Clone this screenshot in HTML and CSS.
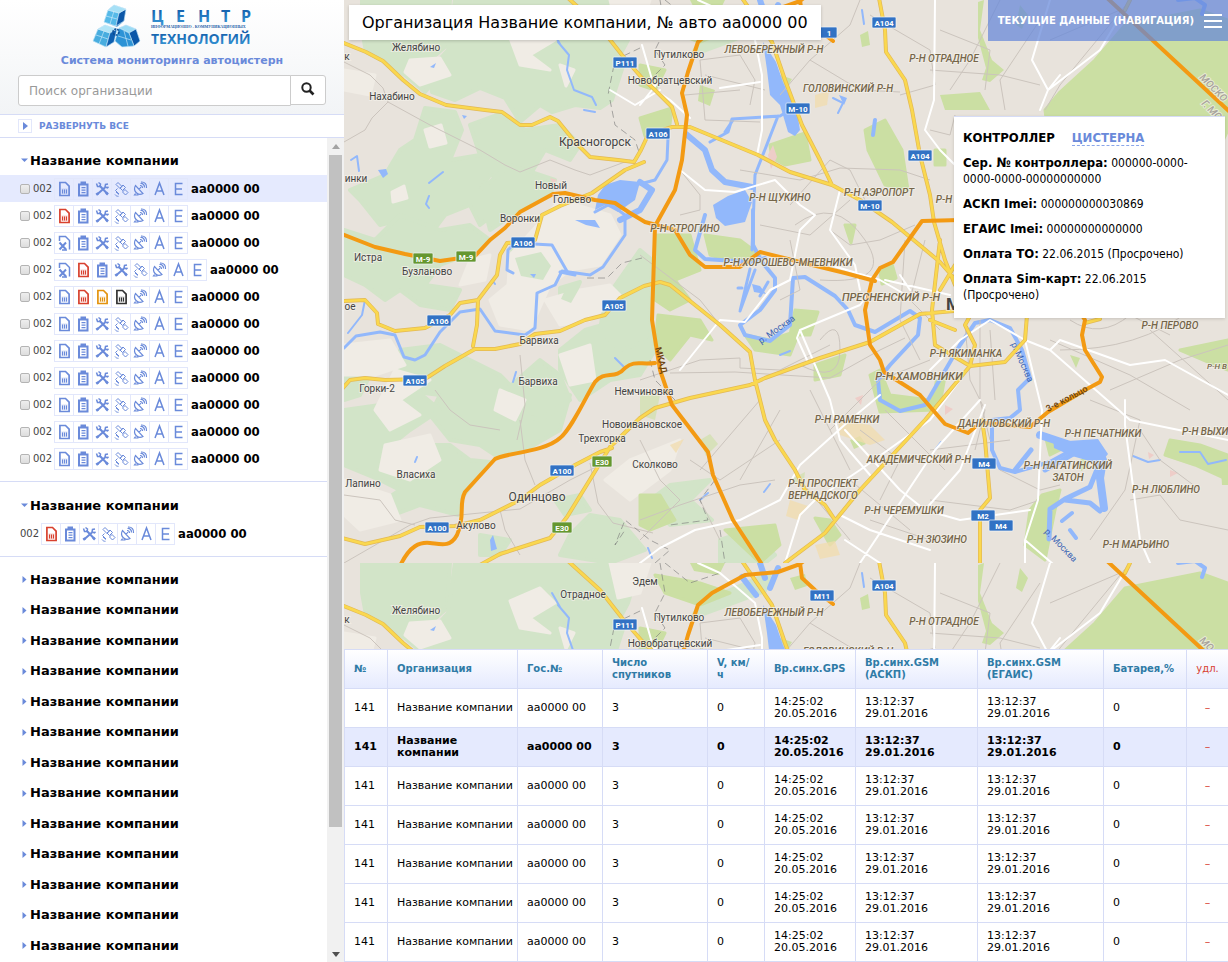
FILE: index.html
```html
<!DOCTYPE html>
<html lang="ru">
<head>
<meta charset="utf-8">
<title>Система мониторинга автоцистерн</title>
<link rel="stylesheet" href="styles.css">
</head>
<body>
<svg class="sprite" aria-hidden="true">
  <symbol id="i-sim" viewBox="0 0 18 20"><path d="M4.900 3.500h5.600l3.600 3.600v9.400h-9.200z" fill="none" stroke="currentColor" stroke-width="1.700"/><path d="M6.500 9.500h6v5.500h-6z" fill="currentColor" opacity=".25"/><path d="M7.500 10.500v4M9.500 10.500v4M11.500 10.500v4" stroke="currentColor" stroke-width="1"/></symbol>
  <symbol id="i-simx" viewBox="0 0 18 20"><path d="M4.500 8V3.500h6l4 4v9M7 17h5" fill="none" stroke="currentColor" stroke-width="1.500"/><path d="M4.500 9.500l6.500 7M11 9.500l-6.500 7" stroke="currentColor" stroke-width="2"/></symbol>
  <symbol id="i-battery" viewBox="0 0 18 20"><path d="M5 5.500h8.500v11H5z" fill="none" stroke="currentColor" stroke-width="2"/><path d="M6.500 2.500h5.500v3H6.500zM7.500 8h4v1.300h-4zM7.500 10.500h4v1.300h-4zM7.500 13h4v1.300h-4z" fill="currentColor"/></symbol>
  <symbol id="i-tools" viewBox="0 0 18 20"><path d="M4 15.500l8-7M6.500 6.500l8 8.500" fill="none" stroke="currentColor" stroke-width="2"/><path d="M3.500 4.500l1 3h2.500l.5-2.500-2-1.500M15 5l-2.500.5-.5 2.500 2.500.8 1-1" fill="none" stroke="currentColor" stroke-width="1.500"/><path d="M13 13.500l2 2M3.500 14l1.500 2" stroke="currentColor" stroke-width="2.500"/></symbol>
  <symbol id="i-sat" viewBox="0 0 18 20"><g fill="none" stroke="currentColor" stroke-width="1"><path d="M4 5.500l2-2 4 4-2 2zM10.500 13l2.500-2.500 3 3-2.500 2.500zM8 9l3-3 2.500 2.500-3 3zM5.500 9.500l-2 2 3.500 3.500"/><path d="M3 15.500c1 1.500 2 1.800 3.500 1.800M4 13l3 2.500"/></g></symbol>
  <symbol id="i-dish" viewBox="0 0 18 20"><g fill="none" stroke="currentColor" stroke-width="1.200"><path d="M4.500 6.500c-3 5 2 11 7.500 8zM4.500 14.500l-1 1.500h4M8 10.500l2-2.500"/><path d="M9 6.500c1.500-.2 2.500 1 2.500 2.500M9.500 4.500c2.500-.3 4.200 1.700 4 4M10 3c4-.3 6 2.500 5.500 6"/></g></symbol>
  <symbol id="i-a" viewBox="0 0 18 20"><path d="M5 16L9.500 4 14 16M6.500 12h6" fill="none" stroke="currentColor" stroke-width="1.500"/></symbol>
  <symbol id="i-e" viewBox="0 0 18 20"><path d="M13.500 4.500H6.500v11h7M6.500 10h6.500" fill="none" stroke="currentColor" stroke-width="1.500"/></symbol>
</svg>

<div class="app">
  <aside class="sidebar">
    <header class="brand">
      <svg class="logo" viewBox="92 4 162 44" width="162" height="44" role="img" aria-label="Центр информационно-коммуникационных технологий">
        <defs>
          <linearGradient id="lg" x1="0" y1="0" x2="1" y2="1"><stop offset="0" stop-color="#8fd8f5"/><stop offset="1" stop-color="#0d56a8"/></linearGradient>
          <linearGradient id="lt" x1="0" y1="0" x2="0" y2="1"><stop offset="0" stop-color="#0b4fa0"/><stop offset="1" stop-color="#3da0dd"/></linearGradient>
        </defs>
        <g stroke="#d7f0fb" stroke-width=".6" stroke-linejoin="round">
          <path d="M105 22l4-12 6-5 12 4-2 12-7 6z" fill="#1a76c2"/><path d="M105 22l4-12 11 3-3 13z" fill="#55b9e8"/><path d="M120 13l7-4-2 12-8 5z" fill="#0b57a8"/><path d="M109 10l6-5 12 4-7 4z" fill="#a6e0f6"/>
          <path d="M94 41l5-12 7-4 12 4-3 13-8 5z" fill="#1a76c2"/><path d="M94 41l5-12 12 4-4 14z" fill="#48addf"/><path d="M99 29l7-4 12 4-7 4z" fill="#b2e5f7"/><path d="M111 33l7-4-3 13-8 5z" fill="#0f5fb0"/>
          <path d="M116 41l4-13 7-3 10 4 4 12-6 5-12 1z" fill="#126bb8"/><path d="M120 28l7-3 10 4-7 4z" fill="#9adbf5"/><path d="M130 33l7-4 4 12-6 5z" fill="#0b57a8"/><path d="M116 41l4-13 10 5 5 13-12 1z" fill="#2c93d6"/>
          <path d="M125 31l4 15M105 31l-5 13M97 35l12 4M119 36l13 4M115 11l-4 13M107 16l11 3" fill="none"/>
        </g>
        <circle cx="117" cy="32" r="3" fill="none" stroke="#0b4b94" stroke-width="1.500" stroke-dasharray="2 1"/>
        <text class="logo-top" y="22" x="152 177 199 222 242" fill="url(#lt)">ЦЕНТР</text>
        <text class="logo-mid" x="152" y="28">ИНФОРМАЦИОННО - КОММУНИКАЦИОННЫХ</text>
        <text class="logo-low" x="152" y="44" fill="url(#lt)">ТЕХНОЛОГИЙ</text>
      </svg>
      <p class="tagline">Система мониторинга автоцистерн</p>
      <form class="search">
        <input class="search-input" type="text" placeholder="Поиск организации" aria-label="Поиск организации">
        <button class="search-btn" type="button" aria-label="Найти"><svg viewBox="0 0 14 14" width="14" height="14"><circle cx="5.500" cy="5.500" r="4.200" fill="none" stroke="#222" stroke-width="2"/><path d="M8.500 8.500l4 4" stroke="#222" stroke-width="2.600"/></svg></button>
      </form>
    </header>
    <button class="expand" type="button"><span class="expand-box"><svg viewBox="0 0 5 8" width="5" height="8"><path d="M0 0l5 4-5 4z" fill="#6a8ada"/></svg></span>РАЗВЕРНУТЬ ВСЕ</button>
    <div class="tree">
      <div class="tree-list" id="tree"></div>
      <div class="scrollbar" aria-hidden="true">
        <svg viewBox="0 0 17 17" width="17" height="17"><path d="M5 11h8l-4-5z" fill="#a3a3a3"/></svg>
        <div class="track"><div class="thumb"></div></div>
        <svg viewBox="0 0 17 17" width="17" height="17"><path d="M5 7h8l-4 5z" fill="#505050"/></svg>
      </div>
    </div>
  </aside>

  <main class="main">
    <section class="map">
      <svg class="map-canvas" viewBox="344 0 884 650" preserveAspectRatio="xMinYMin slice" role="img" aria-label="Карта">
        <defs>
          <clipPath id="tile"><rect x="344" y="0" width="884" height="563"/></clipPath>
          <g id="terrain" clip-path="url(#tile)">
            <rect x="344" width="884" height="563" fill="#e8e3dc"/>
            <g fill="#d2e4c8" stroke="#d2e4c8" stroke-width="4" stroke-linejoin="round">
              <path d="M362 0H450L447 45 430 60 436 80 425 92 405 75 385 62 366 52 362 30z"/>
              <path d="M455 0H570L600 30 625 60 612 100 600 108 575 105 552 112 540 105 520 122 505 98 480 88 455 100 432 92 430 70 448 50z"/>
              <path d="M575 0H640L628 40 620 55 600 28z"/>
              <path d="M425 108L455 112 462 130 450 160 480 155 470 125 500 114 525 130 560 125 580 145 570 160 545 150 530 175 545 190 520 200 510 180 490 175 480 190 500 210 480 225 470 205 445 215 430 235 400 220 380 225 360 200 350 190 385 175 400 150 415 140z"/>
              <path d="M344 230L375 240 400 215 440 230 470 225 490 240 480 250 440 265 425 285 460 290 450 310 420 305 400 290 385 300 365 285 344 275z"/>
              <path d="M480 190L510 165 555 180 550 196 520 210 490 230z"/>
              <path d="M512 250L545 250 553 265 545 280 520 275z"/>
              <path d="M560 288L580 282 572 300 560 302z"/>
              <path d="M560 350L585 330 620 320 645 310 655 350 640 375 610 380 580 400 560 370z"/>
              <path d="M400 350L440 345 470 360 500 375 520 395 545 385 570 395 560 430 520 453 495 455 480 445 450 440 430 415 440 395 400 390z"/>
              <path d="M344 410L380 405 410 385 440 410 410 430 385 450 400 470 420 445 450 445 470 460 490 462 460 500 458 515 420 505 380 520 370 510 400 490 380 480 344 465z"/>
              <path d="M344 360L370 375 360 395 344 400zM500 395L540 360 560 375 570 400 540 420 505 410z"/>
              <path d="M605 300L640 250 652 260 650 340 620 350 600 330z"/>
              <path d="M590 515L620 520 645 550 610 563 560 555 570 535zM480 535L510 540 500 555 480 555zM555 500L580 495 590 510 565 515z"/>
              <path d="M670 485L710 480 690 500 712 520 670 525 650 500zM700 40L770 10 765 28 720 45 692 55z"/>
              <path d="M720 540L750 530 775 555 765 563 720 563z"/>
            </g>
            <g fill="#f0ece5" stroke="#f0ece5" stroke-width="3" stroke-linejoin="round">
              <path d="M410 60L440 58 450 75 420 85 405 72zM510 38L540 25 555 40 530 55 550 70 520 65zM610 0L650 0 640 30 618 35z"/>
              <path d="M510 255L560 200 610 215 620 235 600 265 570 270 550 285 530 330 500 325 490 300 508 285z"/>
              <path d="M580 290L610 285 620 295 590 320 560 325 545 300zM344 345L390 340 405 365 375 375 344 375z"/>
              <path d="M395 370L430 380 400 400 420 415 390 430 375 410zM385 445L430 435 440 460 410 480 380 470z"/>
              <path d="M630 460L680 440 670 470 630 500 605 480zM560 355L590 345 595 380 570 385zM344 480L390 495 400 520 360 530 344 515z"/>
              <path d="M344 70L375 75 370 95 344 90zM470 260L490 255 485 280 460 285zM500 390L525 400 515 420 495 410z"/>
              <path d="M560 65l14 5-8 16zM425 130l16-5 5 18-16 4zM392 192l12-6 3 12-14 4z"/>
            </g>
            <path fill="#d2e4c8" d="M515 258l26-6 10 14-8 14-22-4zM567 286l10-5 2 8-8 14-10-4z"/>
            <g fill="#cbdfa3" stroke="#cbdfa3" stroke-width="3" stroke-linejoin="round">
              <path d="M1125 25L1200 10 1228 20V130L1200 190 1050 150 1045 110 1060 92 1095 60z"/>
              <path d="M640 118L672 108 670 124 645 136zM640 65L665 70 655 90 640 85zM655 12L700 20 730 30 700 42 665 30z"/>
              <path d="M770 145L805 133 810 160 785 165 772 158zM865 130L885 120 902 150 908 190 885 185 868 150z"/>
              <path d="M655 235L690 235 700 270 675 280 690 300 670 310 655 300zM705 235L740 240 760 255 735 262 710 255z"/>
              <path d="M658 315L700 320 712 340 690 335 670 360 655 345zM795 310L818 312 810 335 790 335zM745 335L770 340 800 330 790 355 755 350z"/>
              <path d="M815 365L845 355 840 375 815 380zM870 375L880 370 890 395 930 400 940 390 935 410 880 412zM640 495L660 495 675 520 650 530 640 525z"/>
              <path d="M725 530L775 525 780 545 760 563zM815 518L830 520 840 535 830 545zM935 150h10v15h-10zM845 225h10l-4 18zM880 272l12-8 4 14-14 6z"/>
              <path d="M1042 495L1060 490 1055 510 1045 560 1025 545 1030 510zM1045 435L1070 445 1050 455zM1180 350L1228 340V370L1215 365zM1170 440L1200 445 1228 455 1228 480 1195 465 1165 455z"/>
            </g>
            <g fill="#cbdfa3">
              <path d="M1070 355l10 3-4 10zM940 95L980 92 990 110 945 110zM690 0h35l-6 12-25-4zM790 15l15-4 2 12-12 4zM860 35l8-4 2 14-8 2zM850 440l10-4 6 8-12 5z"/>
              <path d="M780 75l12 4-6 10zM700 85l15 5-5 16-12-5zM1080 460l5-3 4 10-8 4zM935 380l12-6-4 22-14 18zM1220 455h8v30h-6zM978 2l6-2-4 30 12 30 12 10-14 12-8-2 4-12-8-30zM1020 5l8 10-6 14-6-4z"/>
              <path d="M640 390L660 395 655 420 640 415zM700 440l10-6 8 10-12 12zM790 480l15-8-2 16z" opacity=".6"/>
            </g>
            <g fill="#f2dcae"><path d="M838 420L870 425 885 440 870 445 840 435zM790 500l18 6-10 14-12-4zM815 545l20-4 5 14-20 4zM815 95l14-4-2 14-12 3zM670 445l14-6-8 14z" opacity=".75"/></g>
            <g fill="#eecdc8"><path d="M768 155l5-10 4 12-6 12zM855 398l8-3-2 10zM945 405l8 4-8 6zM1170 470l8 3-8 4zM1148 452l6 3-5 4zM550 178l7 2-4 4z"/></g>
            <g fill="none" stroke="#92b8fb" stroke-linecap="round" stroke-linejoin="round">
              <path stroke-width="3" d="M344 348L356 336 380 332 395 335 404 357 415 360 425 355 440 332 460 312 480 309 495 331 525 335 535 328 537 293 555 285 562 271 590 275 603 267 625 235 625 215 610 204 595 212"/>
              <path stroke-width="3" d="M568 273L552 245 515 243 508 250 507 270 513 273M560 272l15 3"/>
              <path stroke-width="2" d="M558 42L569 55 567 70 574 90 592 97 596 105M584 110l11 2M552 30l8 14M351 160l6-4 2 15M429 183l14-11M429 196l-3 8 3 4M492 280l3 4M615 358l8 8M513 382l3-10M415 462l2 -5M365 300l-3 15-14 18"/>
              <path stroke-width="6" d="M686 134L705 150 712 170 725 182 752 187M640 182L652 190 640 210 620 220"/>
              <path stroke-width="3" d="M668 138L667 160 655 180 640 184M710 142L728 132 732 119 780 116 795 107M778 116L755 175 752 250M725 132l8-12"/>
              <path stroke-width="4" d="M705 215L695 250 705 259 750 262 765 258M753 210V245L762 262 775 278 775 290 760 310 740 325 745 335 770 341 790 325 793 278 805 277 835 296 848 310 855 325 875 332 910 311 920 318 918 335 890 365 878 380 880 400 900 411 925 405 960 345 975 323 990 320 1010 328 1022 350 1030 378 1018 390 1020 410 1010 418 992 420 992 450 1000 468 1015 472 1050 462 1072 450"/>
              <path stroke-width="3" d="M750 269L740 311 755 270M768 282l-8 14M738 288h4"/>
              <path stroke-width="8" d="M1040 435L1070 445 1095 446 1103 460 1100 478 1104 508"/>
              <path stroke-width="5" d="M1015 470L1031 450M1045 470l35-20 20 12-10 25-25 12-15 10-1 30M1065 500l25 3 10 8"/>
              <path stroke-width="6" d="M760 0L765 15M778 5l-8 20M742 14l14 18"/>
              <path stroke-width="4" d="M1178 0L1195 -2 1205 5 1202 14M1062 521l10-8M1070 530l6 8M875 120l-2 15"/>
              <path stroke-width="2" d="M862 10l2 14M935 450l6-8M1180 452l20 0 8 12 18-4M1133 456l15 6 12-2M764 492l6-8M700 500l8-7M648 548l4 10M780 355l10-4M833 98l10 5-5 10"/>
            </g>
            <g fill="#92b8fb"><path d="M763 42L776 62 783 82 797 112 800 130 795 136 788 132 780 105 770 95 767 70z"/><path d="M713 205L728 196 745 190 752 202 745 222 725 226 716 218z"/><path d="M605 185L620 180 640 182 635 200 618 212 605 205 595 210 598 195z"/><path d="M575 220l20 0 5 8-14-3zM378 170l8-1 2 5-5 4zM490 540l3-5 4 14-6 2zM1053 437l15 4 30-2 10 15-8 10-28-8-18-8zM752 284l8 2 6 8-12-2zM430 67l6-4-2 5zM462 115l5 1-3 3zM530 274l6 0-2 4zM844 105l-5-10 8 3z"/></g>
            <g fill="none" stroke="#cbc4bd" stroke-width="1">
              <path d="M344 62L370 75 383 88 388 102 430 125 480 150 505 165 520 172 550 160 575 170 590 175 630 160M388 102L372 118 365 130 344 142M344 495L380 500 395 520 415 525M344 563L410 525 430 518 520 509 570 480 610 460M435 390L450 410 470 425 500 430M520 420l5 40 10 25M590 463l8 40 15 20 40 10M500 510l5 20 15 25M640 440L660 480 680 500 640 540M520 355l5 50 -8 35"/>
              <path d="M640 380L700 360 740 358 740 368 780 370 830 345M670 373L735 372 830 378 880 350 905 338M740 170L800 180 840 168 900 170 930 180M860 0L850 25 810 60 780 95M810 60L860 90 900 92M700 60L740 55 755 80 750 105M705 75L765 90M685 95L740 90M700 60L705 120 760 122M870 15L930 50 935 85 900 95M680 170L700 195 700 210 680 215M790 205L830 160 850 170 870 210M760 225L810 235 850 200M790 240L800 290 780 300M830 230L850 245 880 240 915 225"/>
              <path d="M980 320V400L990 440M965 325L970 380 985 410 975 450M990 330L995 400M930 450L1010 440M1000 470L1040 490 1060 485M930 500L1010 510 1040 500M1090 400L1140 420 1125 490 1090 540M1110 390L1180 360 1228 345M1050 340L1130 375 1190 410M1150 330L1228 400M1130 500L1160 495 1180 520 1228 530M1140 430L1160 460 1200 490"/>
              <path d="M940 30L990 50 985 90M1000 0L970 60 950 90M1040 20L1000 80 1005 110M930 70L1000 75 1040 85M930 130L950 135 955 115M1050 40L1120 10M1130 0L1060 85 1045 110"/>
              <path d="M640 520L680 505 740 485 775 480M700 470L760 400M720 540L700 500M860 430L900 460 880 500M800 480L850 540M830 430L880 380 930 360M870 520L930 540M690 460l30 20 60-40M740 480l40-70M810 390l40 80M850 480l60 50M885 410l60 60"/>
              <path d="M795 225q40 -30 70 15t-45 40M640 255L700 300 720 325M820 340q20-25 20 10t-40 15M905 240l-5 80 20 40M925 240l-15 60 30 30M1070 320q30 20 60-5l40 20M1060 350q80 0 130-40"/>
            </g>
            <path fill="none" stroke="#777" stroke-width="1" stroke-dasharray="7 4" opacity=".6" d="M660 0L665 30 655 50 665 65 655 75M640 48L615 60 608 95M610 100L615 125 635 140 640 155M650 360l5 20 20 20M715 480L700 500 708 520 670 525M720 530L725 563M655 563L670 550 650 540 625 520 615 545 625 530M587 278l20 0 15-15 20-5M665 0L690 20 720 10"/>
            <g fill="none" stroke="#fff" stroke-linecap="round" stroke-linejoin="round">
              <path stroke-width="2" d="M698 0L720 10 755 40 762 75 762 130 757 155M720 88L760 82M642 45L655 90 670 100 690 118M660 90l-25 15-25-15M640 105L660 80M680 170L705 190 735 192 775 180 800 205 815 215 800 230 790 280 770 290 745 322 720 320 680 370"/>
              <path stroke-width="2" d="M640 563L660 548 695 530 740 520 780 500 800 465 850 420 880 395M785 563L800 515 815 500 860 470 930 420 960 380M800 330L830 400 840 440 870 475M800 330L860 305 870 292M800 330l-3 8 10 22"/>
              <path stroke-width="2" d="M860 563L935 450 980 400M845 430L900 490 925 510 960 520 1030 510M925 510L960 470 985 405M845 540L880 563M840 515L870 530 930 550M930 370L960 340 990 320 1025 340 1050 350 1130 420 1228 440M1025 340L1042 410 1038 500 1025 540 1060 570M1050 350L1060 340 1130 365 1165 360 1228 395M1125 400L1125 425 1140 540 1150 563M1025 540V563"/>
              <path stroke-width="2" d="M935 0L934 100 925 130 940 150 955 165M1050 0L1032 60 1048 90M1130 0L1100 50 1048 90 1040 110M1048 90L1060 75M830 265L880 280 915 300M900 275L910 290M840 190L830 230 855 265 860 290M885 280L950 295"/>
            </g>
            <g fill="none" stroke-linejoin="round" stroke-linecap="round">
              <g stroke="#e3b955" stroke-width="4">
                <path id="highway" d="M344 43L366 52 383 61 403 80 420 94 446 105 485 110 502 112 520 125 532 125 550 117 558 121 575 142 590 157 618 160 634 162 641 150 648 135 672 127 690 127 758 155 790 172 832 185 860 200 892 222 940 262 960 285M568 -2L600 27 622 55 642 78 655 90 672 107 677 124M742 -2L772 42 785 80 802 125 820 160 832 185M879 -2L885 30 886 52 905 80 912 110 920 155 930 195 934 222 945 260 955 285M644 162L625 170 592 193 560 206 542 215 535 240 507 243 500 255 497 275 478 300 460 303 450 315 425 328 395 331 378 324 377 313 365 300 344 301M478 300L477 325 473 346M342 389L350 380 365 378 385 380 425 379 445 366 475 349 495 349 520 344 535 334 560 331 585 320 605 315 620 298 644 286 660 282 670 285 720 325 750 352 755 380 765 420 775 440 795 470 805 490 825 505 835 520M480 565L500 554 550 538 567 517 610 447 640 418 655 408 690 398 750 385 765 378 820 358 870 342 920 314 965 310M342 538L365 544 400 536 420 527 455 526 480 520 520 500 540 485 575 465 600 452 612 448M785 563L825 533 860 490 925 420 970 366 975 345 965 325 970 316M940 240L932 310 935 345 970 366 1005 362 1025 340 1027 315M955 265L940 290M930 320L955 330M980 563V510L990 498 985 440 982 420M1130 0L1125 10M1085 323l15-4"/>
              </g>
              <use href="#highway" stroke="#fad84f" stroke-width="2.600"/>
              <path stroke="#f39a13" stroke-width="4" d="M805 -3L800 1 778 9 745 12 712 30 698 42 688 72 682 93 687 115 682 160 675 190 655 226 652 320 660 370 672 405 708 452 713 475 733 520 763 566M800 0L802 15 815 27 833 41M342 234L375 247 405 254 440 261 475 256 490 240 505 228 520 212 553 194 565 193 595 200 615 203 630 213 645 222 675 230 690 255 705 267 740 267 760 252 800 262 845 273 875 281M960 220L922 221 905 245 893 262 880 268 872 280 865 310 870 345 880 360 884 372 920 395 945 424 968 433 975 427M985 423L1030 427 1048 412 1085 390 1100 382 1102 377 1085 350 1082 335 1085 320 1075 305M1106 -3L1232 114"/>
              <path stroke="#f39a13" stroke-width="4" d="M400 566C410 545 420 542 430 543S450 548 457 535C466 515 458 505 465 492L495 459C505 453 545 452 560 438 572 428 585 398 595 382 605 370 615 380 625 368 635 360 640 365 655 363"/>
            </g>
          </g>
          <rect id="sh" width="24" height="11" rx="1" fill="#3272c4" stroke="#f2f5f8" stroke-width=".7"/>
          <rect id="shg" width="20" height="11" rx="1" fill="#65972f" stroke="#f2f5f8" stroke-width=".7"/>
        </defs>
        <use href="#terrain"/>
        <use href="#terrain" y="563"/>
        <g>
          <use href="#sh" x="813" y="27"/><use href="#sh" x="872" y="17"/><use href="#sh" x="613" y="57"/><use href="#sh" x="786" y="103"/><use href="#sh" x="646" y="128"/><use href="#sh" x="908" y="150"/><use href="#sh" x="858" y="200"/><use href="#sh" x="511" y="237"/><use href="#sh" x="602" y="300"/><use href="#sh" x="427" y="315"/><use href="#sh" x="403" y="375"/><use href="#sh" x="550" y="465"/><use href="#sh" x="425" y="522"/><use href="#sh" x="972" y="458"/><use href="#sh" x="971" y="510"/><use href="#sh" x="989" y="520"/><use href="#sh" x="872" y="580"/><use href="#sh" x="810" y="590"/><use href="#sh" x="613" y="619"/>
          <use href="#shg" x="413" y="253"/><use href="#shg" x="456" y="251"/><use href="#shg" x="592" y="456"/><use href="#shg" x="552" y="522"/>
        </g>
        <g class="road-no">
          <text x="829" y="36">1</text><text x="884" y="26">A104</text><text x="625" y="66">P111</text><text x="798" y="112">M-10</text><text x="658" y="137">A106</text><text x="920" y="159">A104</text><text x="870" y="209">M-10</text><text x="523" y="246">A106</text><text x="614" y="309">A105</text><text x="439" y="324">A106</text><text x="415" y="384">A105</text><text x="562" y="474">A100</text><text x="437" y="531">A100</text><text x="984" y="467">M4</text><text x="983" y="519">M2</text><text x="1001" y="529">M4</text><text x="884" y="589">A104</text><text x="822" y="599">M11</text><text x="625" y="628">P111</text>
          <text x="423" y="262">M-9</text><text x="466" y="260">M-9</text><text x="602" y="465">E30</text><text x="562" y="531">E30</text>
        </g>
        <g class="place">
          <text x="416" y="51">Желябино</text><text x="347" y="60">к</text><text x="392" y="100">Нахабино</text><text x="679" y="58">Путилково</text><text x="670" y="84">Новобратцевский</text><text x="595" y="146" class="city">Красногорск</text><text x="356" y="182">инки</text><text x="551" y="189">Новый</text><text x="572" y="203">Гольево</text><text x="520" y="222">Воронки</text><text x="368" y="261">Истра</text><text x="427" y="275">Бузланово</text><text x="350" y="310">ое</text><text x="539" y="344">Барвиха</text><text x="538" y="385">Барвиха</text><text x="377" y="392">Горки-2</text><text x="644" y="395">Немчиновка</text><text x="642" y="428">Новоивановское</text><text x="602" y="442">Трехгорка</text><text x="655" y="468">Сколково</text><text x="416" y="478">Власиха</text><text x="363" y="487">Лапино</text><text x="537" y="501" class="city">Одинцово</text><text x="476" y="529">Акулово</text>
          <text x="416" y="614">Желябино</text><text x="347" y="623">к</text><text x="583" y="598">Отрадное</text><text x="645" y="585">Эдем</text><text x="679" y="621">Путилково</text><text x="670" y="647">Новобратцевский</text><text x="946" y="310" class="big">М</text>
        </g>
        <g class="district">
          <text x="774" y="53">ЛЕВОБЕРЕЖНЫЙ Р-Н</text><text x="944" y="62">Р-Н ОТРАДНОЕ</text><text x="848" y="92">ГОЛОВИНСКИЙ Р-Н</text><text x="879" y="196">Р-Н АЭРОПОРТ</text><text x="944" y="203">Р-Н</text><text x="780" y="201">Р-Н ЩУКИНО</text><text x="685" y="232">Р-Н СТРОГИНО</text><text x="788" y="266">Р-Н ХОРОШЕВО-МНЕВНИКИ</text><text x="891" y="301" class="wide">ПРЕСНЕНСКИЙ Р-Н</text><text x="966" y="357">Р-Н ЯКИМАНКА</text><text x="919" y="380" class="wide">Р-Н ХАМОВНИКИ</text><text x="847" y="423">Р-Н РАМЕНКИ</text><text x="919" y="463">АКАДЕМИЧЕСКИЙ Р-Н</text><text x="823" y="487">Р-Н ПРОСПЕКТ</text><text x="823" y="499">ВЕРНАДСКОГО</text><text x="904" y="514">Р-Н ЧЕРЕМУШКИ</text><text x="937" y="543">Р-Н ЗЮЗИНО</text><text x="1004" y="427">ДАНИЛОВСКИЙ Р-Н</text><text x="1103" y="437">Р-Н ПЕЧАТНИКИ</text><text x="1068" y="469">Р-Н НАГАТИНСКИЙ</text><text x="1068" y="481">ЗАТОН</text><text x="1166" y="493">Р-Н ЛЮБЛИНО</text><text x="1136" y="548">Р-Н МАРЬИНО</text><text x="1170" y="329">Р-Н ПЕРОВО</text><text x="1182" y="435" class="start">Р-Н ВЫХИ</text><text x="1207" y="369" class="start small">Р-Н В</text>
          <text x="774" y="616">ЛЕВОБЕРЕЖНЫЙ Р-Н</text><text x="944" y="625">Р-Н ОТРАДНОЕ</text><text x="848" y="655">ГОЛОВИНСКИЙ Р-Н</text>
          <text class="start border-name" transform="translate(1199 78) rotate(45)">МОСКО</text><text class="start border-name" transform="translate(1201 104) rotate(45)">Г. МО</text><text class="start border-name" transform="translate(1199 641) rotate(45)">МО</text>
        </g>
        <text class="river" transform="translate(761 344) rotate(-35)">р. Москва</text>
        <text class="river" transform="translate(1011 344) rotate(66)">р. Москва</text>
        <text class="river" transform="translate(1044 532) rotate(46)">р. Москва</text>
        <text class="ring" transform="translate(655 348) rotate(76)">МКАД</text>
        <text class="ring" transform="translate(1048 412) rotate(-28)">3-е кольцо</text>
      </svg>
      <h1 class="map-title">Организация Название компании, № авто аа0000 00</h1>
      <button class="menu-btn" type="button"><span>ТЕКУЩИЕ ДАННЫЕ (НАВИГАЦИЯ)</span><svg viewBox="0 0 18 14" width="18" height="14"><path d="M0 1h18M0 7h18M0 13h18" stroke="#fff" stroke-width="2"/></svg></button>
      <div class="info">
        <nav class="tabs"><span class="tab-on">КОНТРОЛЛЕР</span><a class="tab" href="#">ЦИСТЕРНА</a></nav>
        <p><b>Сер. № контроллера:</b> 000000-0000-0000-0000-00000000000</p>
        <p><b>АСКП Imei:</b> 000000000030869</p>
        <p><b>ЕГАИС Imei:</b> 00000000000000</p>
        <p><b>Оплата ТО:</b> 22.06.2015 (Просрочено)</p>
        <p><b>Оплата Sim-карт:</b> 22.06.2015 (Просрочено)</p>
      </div>
    </section>
    <table class="data">
      <colgroup><col class="c-no"><col class="c-org"><col class="c-plate"><col class="c-sat"><col class="c-speed"><col class="c-gps"><col class="c-askp"><col class="c-egais"><col class="c-bat"><col class="c-del"></colgroup>
      <thead><tr><th>№</th><th>Организация</th><th>Гос.№</th><th>Число спутников</th><th>V, км/<br>ч</th><th>Вр.синх.GPS</th><th>Вр.синх.GSM (АСКП)</th><th>Вр.синх.GSM (ЕГАИС)</th><th>Батарея,%</th><th class="del">удл.</th></tr></thead>
      <tbody id="rows"></tbody>
    </table>
  </main>
</div>
<script src="script.js"></script>
</body>
</html>
```
FILE: styles.css
```css
* { box-sizing: border-box; }
body { margin: 0; font-family: Verdana, "DejaVu Sans", sans-serif; font-size: 11px; color: #000; background: #fff; }
button, input { font-family: inherit; }
p, h1, h2 { margin: 0; }
.sprite { position: absolute; width: 0; height: 0; }
.app { display: flex; height: 100vh; overflow: hidden; }

.sidebar { flex: 0 0 344px; display: flex; flex-direction: column; min-height: 0; }
.brand { display: flex; flex-direction: column; align-items: center; padding: 4px 18px 8px; background: linear-gradient(#fff, #f2f4f6); border-bottom: 1px solid #d6dcf6; }
.logo { display: block; }
.logo-top { font: bold 16px "Open Sans", sans-serif; }
.logo-mid { font: bold 4px "Liberation Serif", serif; fill: #1c5da8; }
.logo-low { font: bold 14px "Open Sans", sans-serif; }
.tagline { font: bold 11px/14px "DejaVu Sans", sans-serif; color: #6a8ada; padding: 6px 0 7px; }
.search { display: flex; width: 100%; height: 31px; }
.search-input { flex: 1; min-width: 0; border: 1px solid #ccc; border-radius: 3px 0 0 3px; padding: 0 10px; font-size: 12px; background: #fff; }
.search-input::placeholder { color: #999; }
.search-btn { width: 36px; height: 30px; margin-left: -1px; padding: 0; border: 1px solid #ccc; border-radius: 0 3px 3px 0; background: #fff; }
.expand { display: flex; align-items: center; height: 23px; padding: 0 18px; border: 0; border-bottom: 1px solid #d6dcf6; background: #fff; color: #6a8ada; font: bold 9px "DejaVu Sans", sans-serif; }
.expand-box { display: flex; align-items: center; justify-content: center; width: 14px; height: 14px; margin-right: 7px; border: 1px solid #e2e7fb; }

.tree { flex: 1; display: flex; min-height: 0; }
.tree-list { flex: 1; overflow: hidden; }
.scrollbar { width: 17px; display: flex; flex-direction: column; background: #f1f1f1; }
.track { flex: 1; padding: 0 2px; }
.thumb { height: 85%; background: #c1c1c1; }
.group { padding: 7px 0 9px; border-bottom: 1px solid #d6dcf6; }
.group + .group { padding-top: 8px; }
.company { display: flex; align-items: center; height: 30px; padding-left: 20px; font: bold 13px "DejaVu Sans", sans-serif; }
.company svg { width: 8px; height: 8px; margin-right: 2px; }
.closed { padding-top: 7px; }
.closed .company:nth-child(even) { height: 31px; }
.vehicle { display: flex; align-items: center; height: 27px; padding-left: 20px; }
.vehicle.active { background: #e5eafe; }
.check { appearance: none; width: 10px; height: 10px; margin: 0 3px 0 0; border: 1px solid #b4b4b4; border-radius: 2px; background: linear-gradient(#eee, #ddd); }
.num { width: 21px; font: 10px "DejaVu Sans", sans-serif; color: #444; }
.icons { display: flex; border: 1px solid #e2e7fb; margin-right: 3px; }
.icon { width: 19px; height: 20px; color: #6a8ada; border-left: 1px solid #e2e7fb; }
.icon:first-child { width: 18px; border-left: 0; }
.icon svg { display: block; width: 18px; height: 20px; }
.icon.red { color: #d8412f; }
.icon.orange { color: #e3930f; }
.icon.black { color: #333; }
.plate { font: bold 13px "DejaVu Sans Condensed", "DejaVu Sans", sans-serif; }

.main { flex: 1; min-width: 0; display: flex; flex-direction: column; }
.map { flex: 1; min-height: 0; position: relative; overflow: hidden; }
.map-canvas { display: block; width: 100%; height: 100%; }
.map-canvas text { font-family: Roboto, sans-serif; }
.road-no { font-size: 8px; font-weight: bold; fill: #fff; text-anchor: middle; }
.place, .district { text-anchor: middle; paint-order: stroke; stroke: #f4f1ea; stroke-width: 2px; stroke-opacity: .7; }
.place { font-size: 10px; fill: #444; }
.place .city { font-size: 12px; }
.place .big { font-size: 17px; font-weight: bold; text-anchor: start; }
.district { font-size: 10px; font-style: italic; font-weight: 500; fill: #75664a; }
.district .wide { font-size: 11px; }
.district .small { font-size: 8px; }
.district .start { text-anchor: start; }
.district .border-name { fill: #a7a39c; }
.river { font-size: 9px; fill: #3b64b4; }
.ring { font-size: 9px; font-weight: 500; fill: #6b4310; }
.map-title { position: absolute; left: 5px; top: 5px; height: 35px; padding: 0 13px; background: #fff; box-shadow: 0 1px 3px rgba(0, 0, 0, .2); font: 16px/36px "DejaVu Sans", sans-serif; white-space: nowrap; }
.menu-btn { position: absolute; right: 0; top: 0; height: 41px; display: flex; align-items: center; gap: 10px; padding: 0 6px 0 10px; border: 0; background: rgba(100, 134, 218, .72); color: #fff; font: bold 10px "DejaVu Sans", sans-serif; white-space: nowrap; }
.info { position: absolute; right: 3px; top: 116px; width: 271px; padding: 13px 10px 15px 9px; background: #fff; border-top: 1px solid #d6dcf6; box-shadow: 0 1px 3px rgba(0, 0, 0, .15); font: 12px/16px "DejaVu Sans Condensed", "DejaVu Sans", sans-serif; }
.info p { margin-top: 9px; }
.info b { font-size: 13px; line-height: 15px; }
.tabs { display: flex; gap: 17px; font-size: 13px; font-weight: bold; line-height: 15px; }
.tab { color: #6a8ada; text-decoration: none; border-bottom: 1px dashed #8aa6ea; }

.data { width: 100%; border-collapse: collapse; table-layout: fixed; font: 11px/12px "DejaVu Sans", sans-serif; }
.data th, .data td { height: 39px; padding: 0 0 0 9px; border: 1px solid #d6dcf6; text-align: left; vertical-align: middle; }
.data th { color: #2f7ba6; font-size: 10px; }
.data thead tr { background: linear-gradient(#fff, #e5eafe); }
.data tr.active { background: #e5eafe; font-weight: bold; }
.data .del { padding: 0; text-align: center; color: #d8412f; font-weight: normal; }
.c-no { width: 43px; }
.c-org { width: 130px; }
.c-plate { width: 85px; }
.c-sat { width: 105px; }
.c-speed { width: 57px; }
.c-gps { width: 91px; }
.c-askp { width: 122px; }
.c-egais { width: 126px; }
.c-bat { width: 83px; }
.c-del { width: 42px; }
```
FILE: script.js
```js
const base = ['sim', 'battery', 'tools', 'sat', 'dish', 'a', 'e'];
const icons = (list) => '<span class="icons">' + list.map((item) => {
  const [name, color] = item.split(':');
  return `<span class="icon ${color || ''}"><svg><use href="#i-${name}"/></svg></span>`;
}).join('') + '</span>';
const vehicle = (list, check, active) => `<div class="vehicle ${active ? 'active' : ''}">` +
  (check ? '<input class="check" type="checkbox" aria-label="аа0000 00">' : '') +
  `<span class="num">002</span>${icons(list)}<span class="plate">аа0000 00</span></div>`;
const company = (open) => `<div class="company"><svg viewBox="0 0 8 8"><path d="${open ? 'M1 2.5h7L4.500 6z' : 'M2.500 1v7l4-3.500z'}" fill="#6a8ada"/></svg><span>Название компании</span></div>`;

const fleet = [
  base,
  ['sim:red', ...base.slice(1)],
  ['simx', ...base.slice(1)],
  ['simx', 'sim:red', ...base.slice(1)],
  ['sim', 'sim:red', 'sim:orange', 'sim:black', 'dish', 'a', 'e'],
  base, base, base, base, base, base
];
document.getElementById('tree').innerHTML =
  `<div class="group">${company(true)}${fleet.map((l, i) => vehicle(l, true, i === 0)).join('')}</div>` +
  `<div class="group">${company(true)}${vehicle(fleet[1], false, false)}</div>` +
  `<div class="closed">${company(false).repeat(13)}</div>`;

const cells = ['141', 'Название компании', 'аа0000 00', '3', '0', '14:25:02<br>20.05.2016', '13:12:37<br>29.01.2016', '13:12:37<br>29.01.2016', '0'];
document.getElementById('rows').innerHTML = Array.from({ length: 7 }, (_, i) =>
  `<tr class="${i === 1 ? 'active' : ''}">${cells.map((c) => `<td>${c}</td>`).join('')}<td class="del">–</td></tr>`).join('');
```
